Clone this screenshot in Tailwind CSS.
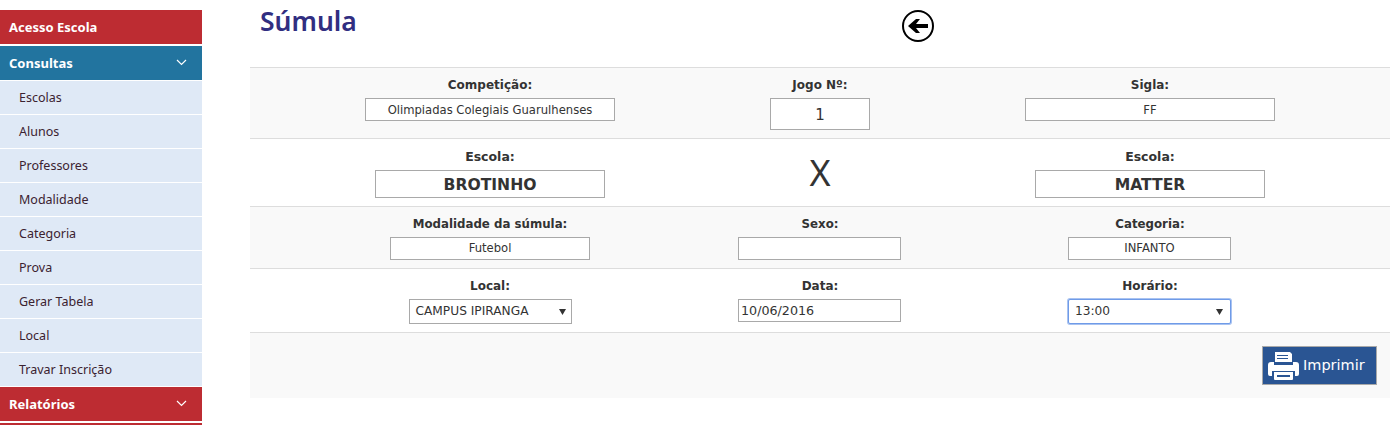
<!DOCTYPE html>
<html lang="pt-BR">
<head>
    <meta charset="UTF-8">
    <title>Súmula</title>
    <script src="https://cdn.jsdelivr.net/npm/@tailwindcss/browser@4"></script>
</head>
<body class="bg-white h-[425px] overflow-hidden font-['DejaVu_Sans',sans-serif] text-[#333]">
    <div class="flex">
        <!-- Menu -->
        <aside class="w-[202px] pt-[10px] shrink-0 font-['Noto_Sans',sans-serif] text-[13px]">
            <a class="flex items-center h-[34px] pt-[2px] px-[9px] bg-[#bd2c32] text-white font-bold">Acesso Escola</a>
            <a class="flex items-center justify-between h-[34px] mt-[2px] pt-[2px] px-[9px] bg-[#22749f] text-white font-bold">
                Consultas
                <svg class="mr-[6px] mb-[4px]" width="11" height="7" viewBox="0 0 11 7" fill="none" stroke="#fff" stroke-width="1.2"><path d="M1 1l4.500 4.500L10 1"/></svg>
            </a>
            <ul class="text-[12.5px] text-[#3b2230]">
                <li class="flex items-center h-[34px] pt-[2px] pl-[19px] bg-[#dfe9f6] border-t border-white">Escolas</li>
                <li class="flex items-center h-[34px] pt-[2px] pl-[19px] bg-[#dfe9f6] border-t border-white">Alunos</li>
                <li class="flex items-center h-[34px] pt-[2px] pl-[19px] bg-[#dfe9f6] border-t border-white">Professores</li>
                <li class="flex items-center h-[34px] pt-[2px] pl-[19px] bg-[#dfe9f6] border-t border-white">Modalidade</li>
                <li class="flex items-center h-[34px] pt-[2px] pl-[19px] bg-[#dfe9f6] border-t border-white">Categoria</li>
                <li class="flex items-center h-[34px] pt-[2px] pl-[19px] bg-[#dfe9f6] border-t border-white">Prova</li>
                <li class="flex items-center h-[34px] pt-[2px] pl-[19px] bg-[#dfe9f6] border-t border-white">Gerar Tabela</li>
                <li class="flex items-center h-[34px] pt-[2px] pl-[19px] bg-[#dfe9f6] border-t border-white">Local</li>
                <li class="flex items-center h-[34px] pt-[2px] pl-[19px] bg-[#dfe9f6] border-t border-white">Travar Inscrição</li>
            </ul>
            <a class="flex items-center justify-between h-[35px] pt-[2px] px-[9px] bg-[#bd2c32] border-t border-white text-white font-bold">
                Relatórios
                <svg class="mr-[6px] mb-[4px]" width="11" height="7" viewBox="0 0 11 7" fill="none" stroke="#fff" stroke-width="1.2"><path d="M1 1l4.500 4.500L10 1"/></svg>
            </a>
            <div class="h-[10px] mt-[2px] bg-[#bd2c32]"></div>
        </aside>

        <!-- Conteudo -->
        <main class="ml-[48px] w-[1140px]">
            <div class="relative h-[67px]">
                <h1 class="pl-[10px] pt-[2px] font-['Noto_Sans',sans-serif] text-[26.5px] leading-[38px] font-semibold text-[#312e81]">Súmula</h1>
                <svg class="absolute left-[651px] top-[9px]" width="34" height="34" viewBox="0 0 34 34">
                    <circle cx="17" cy="17" r="15" fill="none" stroke="#000" stroke-width="2"/>
                    <path d="M27 15h-12l4-5h-4l-8 7 8 7h4l-4-5h12z" fill="#000"/>
                </svg>
            </div>

            <div class="grid grid-cols-[480px_180px_480px] h-[71px] pt-[8px] bg-[#f9f9f9] border-t border-[#ddd] text-[12px] text-center">
                <div>
                    <div class="font-bold leading-[18px]">Competição:</div>
                    <div class="w-[250px] h-[23px] mt-[4px] mx-auto border border-[#a9a9a9] bg-white text-[11.6px] leading-[23px]">Olimpiadas Colegiais Guarulhenses</div>
                </div>
                <div>
                    <div class="font-bold leading-[18px]">Jogo Nº:</div>
                    <div class="w-[100px] h-[32px] mt-[4px] mx-auto border border-[#a9a9a9] bg-white text-[15px] leading-[32px]">1</div>
                </div>
                <div>
                    <div class="font-bold leading-[18px]">Sigla:</div>
                    <div class="w-[250px] h-[23px] mt-[4px] mx-auto border border-[#a9a9a9] bg-white text-[11.6px] leading-[23px]">FF</div>
                </div>
            </div>

            <div class="grid grid-cols-[480px_180px_480px] h-[68px] pt-[9px] border-t border-[#ddd] text-[12.5px] text-center">
                <div>
                    <div class="font-bold leading-[18px]">Escola:</div>
                    <div class="w-[230px] h-[28px] mt-[4px] mx-auto border border-[#a9a9a9] bg-white text-[15.6px] font-bold leading-[28px]">BROTINHO</div>
                </div>
                <div class="text-[36px] leading-[50px] font-['Noto_Sans',sans-serif]">X</div>
                <div>
                    <div class="font-bold leading-[18px]">Escola:</div>
                    <div class="w-[230px] h-[28px] mt-[4px] mx-auto border border-[#a9a9a9] bg-white text-[15.6px] font-bold leading-[28px]">MATTER</div>
                </div>
            </div>

            <div class="grid grid-cols-[480px_180px_480px] h-[62px] pt-[8px] bg-[#f9f9f9] border-t border-[#ddd] text-[11.8px] text-center">
                <div>
                    <div class="font-bold leading-[18px]">Modalidade da súmula:</div>
                    <div class="w-[200px] h-[23px] mt-[4px] mx-auto border border-[#a9a9a9] bg-white text-[11.6px] leading-[21px]">Futebol</div>
                </div>
                <div>
                    <div class="font-bold leading-[18px]">Sexo:</div>
                    <div class="w-[163px] h-[23px] mt-[4px] ml-[8px] border border-[#a9a9a9] bg-white"></div>
                </div>
                <div>
                    <div class="font-bold leading-[18px]">Categoria:</div>
                    <div class="w-[163px] h-[23px] mt-[4px] ml-[158px] border border-[#a9a9a9] bg-white text-[11.6px] leading-[21px]">INFANTO</div>
                </div>
            </div>

            <div class="grid grid-cols-[480px_180px_480px] h-[64px] pt-[8px] border-t border-[#ddd] text-[12px] text-center">
                <div>
                    <div class="font-bold leading-[18px]">Local:</div>
                    <div class="flex items-center justify-between w-[163px] h-[25px] mt-[4px] mx-auto pl-[6px] pr-[5px] border border-[#a9a9a9] bg-white text-[12.2px]">
                        CAMPUS IPIRANGA
                        <svg width="7" height="6" viewBox="0 0 7 6"><path d="M0 0h7L3.500 6z" fill="#333"/></svg>
                    </div>
                </div>
                <div>
                    <div class="font-bold leading-[18px]">Data:</div>
                    <div class="w-[163px] h-[23px] mt-[4px] ml-[8px] pl-[2px] border border-[#a9a9a9] bg-white text-[12.7px] leading-[21px] text-left">10/06/2016</div>
                </div>
                <div>
                    <div class="font-bold leading-[18px]">Horário:</div>
                    <div class="flex items-center justify-between w-[163px] h-[25px] mt-[4px] ml-[158px] pl-[6px] pr-[7px] border border-[#6f9be8] rounded-[2px] ring-1 ring-[#6f9be8]/60 bg-white text-[12.2px]">
                        13:00
                        <svg width="7" height="6" viewBox="0 0 7 6"><path d="M0 0h7L3.500 6z" fill="#333"/></svg>
                    </div>
                </div>
            </div>

            <div class="flex justify-end h-[66px] pt-[13px] pr-[13px] bg-[#f9f9f9] border-t border-[#ddd]">
                <button class="flex items-center h-[39px] w-[115px] pl-[5px] gap-[4px] bg-[#2a5593] border border-[#a9a9a9] text-white text-[14.5px]">
                    <svg width="31" height="30" viewBox="0 0 31 30" fill="#fff">
                        <path fill-rule="evenodd" d="M7 1h15l2 2v8H7zM9 4v1h11V4zM9 7v1h11V7zM3 11h3v3h19v-3h3q3 0 3 3v9q0 2-2 2h-2v-5H4v5H2q-2 0-2-2v-9q0-3 3-3z"/>
                        <path fill-rule="evenodd" d="M6 21h19v7q0 1-1 1H7q-1 0-1-1zM9 24v2h13v-2z"/>
                    </svg>
                    Imprimir
                </button>
            </div>
        </main>
    </div>
</body>
</html>
